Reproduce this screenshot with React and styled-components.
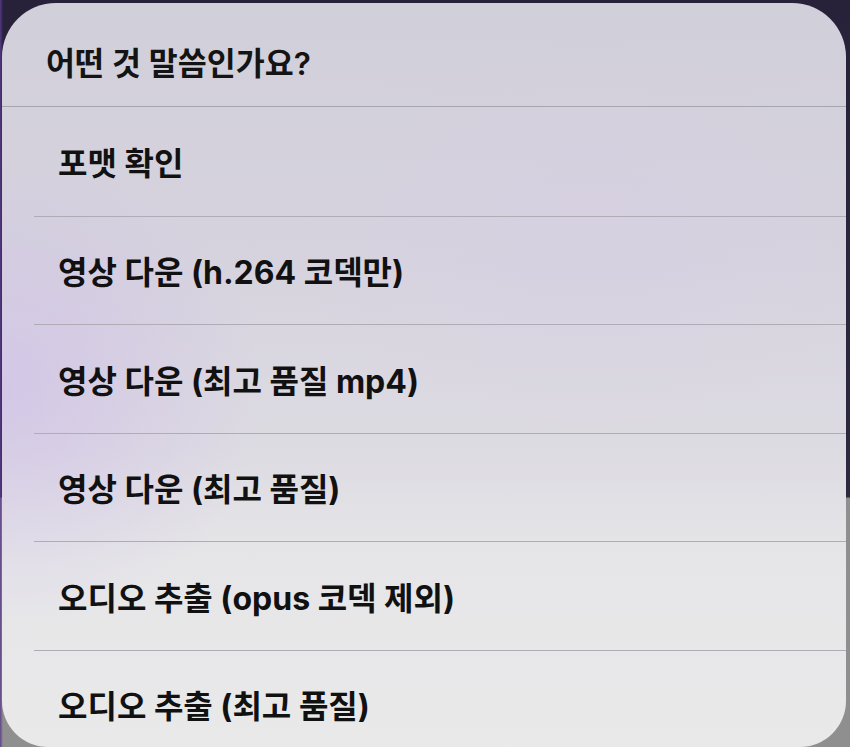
import React from "react";
import styled, { createGlobalStyle } from "styled-components";

const Global = createGlobalStyle`
  html, body { margin: 0; padding: 0; }
  body {
    width: 850px;
    height: 747px;
    overflow: hidden;
    font-family: "Inter", "Noto Sans CJK KR", sans-serif;
  }
`;

const Backdrop = styled.div`
  width: 850px;
  height: 747px;
  box-sizing: border-box;
  padding: 3px 4px 0 2px;
  background:
    linear-gradient(90deg, rgba(90, 60, 140, 0.9) 0px, rgba(90, 60, 140, 0) 3px),
    linear-gradient(180deg, #27223a 0px, #2e2840 497px, #8f8f8f 498px, #8f8f8f 100%);
  overflow: hidden;
`;

const Sheet = styled.div`
  height: 744px;
  border-radius: 54px 54px 46px 46px;
  overflow: hidden;
  background:
    radial-gradient(ellipse 260px 240px at 0% 52%, rgba(205, 185, 235, 0.55), rgba(205, 185, 235, 0) 100%),
    radial-gradient(ellipse 300px 200px at 70% 30%, rgba(215, 205, 230, 0.4), rgba(215, 205, 230, 0) 100%),
    linear-gradient(180deg, #d1cfd9 0%, #d6d3de 35%, #dddbe2 60%, #e6e6e8 75%, #e9e9ea 100%);
  display: flex;
  flex-direction: column;
`;

const Title = styled.div`
  flex-shrink: 0;
  height: 104px;
  box-sizing: border-box;
  padding: 13px 0 0 44px;
  display: flex;
  align-items: center;
  font-size: 31.5px;
  font-weight: 600;
  color: #141414;
  border-bottom: 1.5px solid #a7a6ad;
`;

const List = styled.div`
  flex-shrink: 0;
  display: flex;
  flex-direction: column;
`;

const Item = styled.div`
  flex-shrink: 0;
  height: 108.5px;
  box-sizing: border-box;
  margin-left: 32px;
  padding-left: 24px;
  display: flex;
  align-items: center;
  font-size: 32px;
  font-weight: 700;
  color: #111;
  border-top: ${(p) => (p.$first ? "none" : "1.5px solid #aeacb4")};
`;

const items = [
  "포맷 확인",
  "영상 다운 (h.264 코덱만)",
  "영상 다운 (최고 품질 mp4)",
  "영상 다운 (최고 품질)",
  "오디오 추출 (opus 코덱 제외)",
  "오디오 추출 (최고 품질)",
];

export default function App() {
  return (
    <>
      <Global />
      <Backdrop>
        <Sheet>
          <Title>어떤 것 말씀인가요?</Title>
          <List>
            {items.map((t, i) => (
              <Item key={t} $first={i === 0}>
                {t}
              </Item>
            ))}
          </List>
        </Sheet>
      </Backdrop>
    </>
  );
}
